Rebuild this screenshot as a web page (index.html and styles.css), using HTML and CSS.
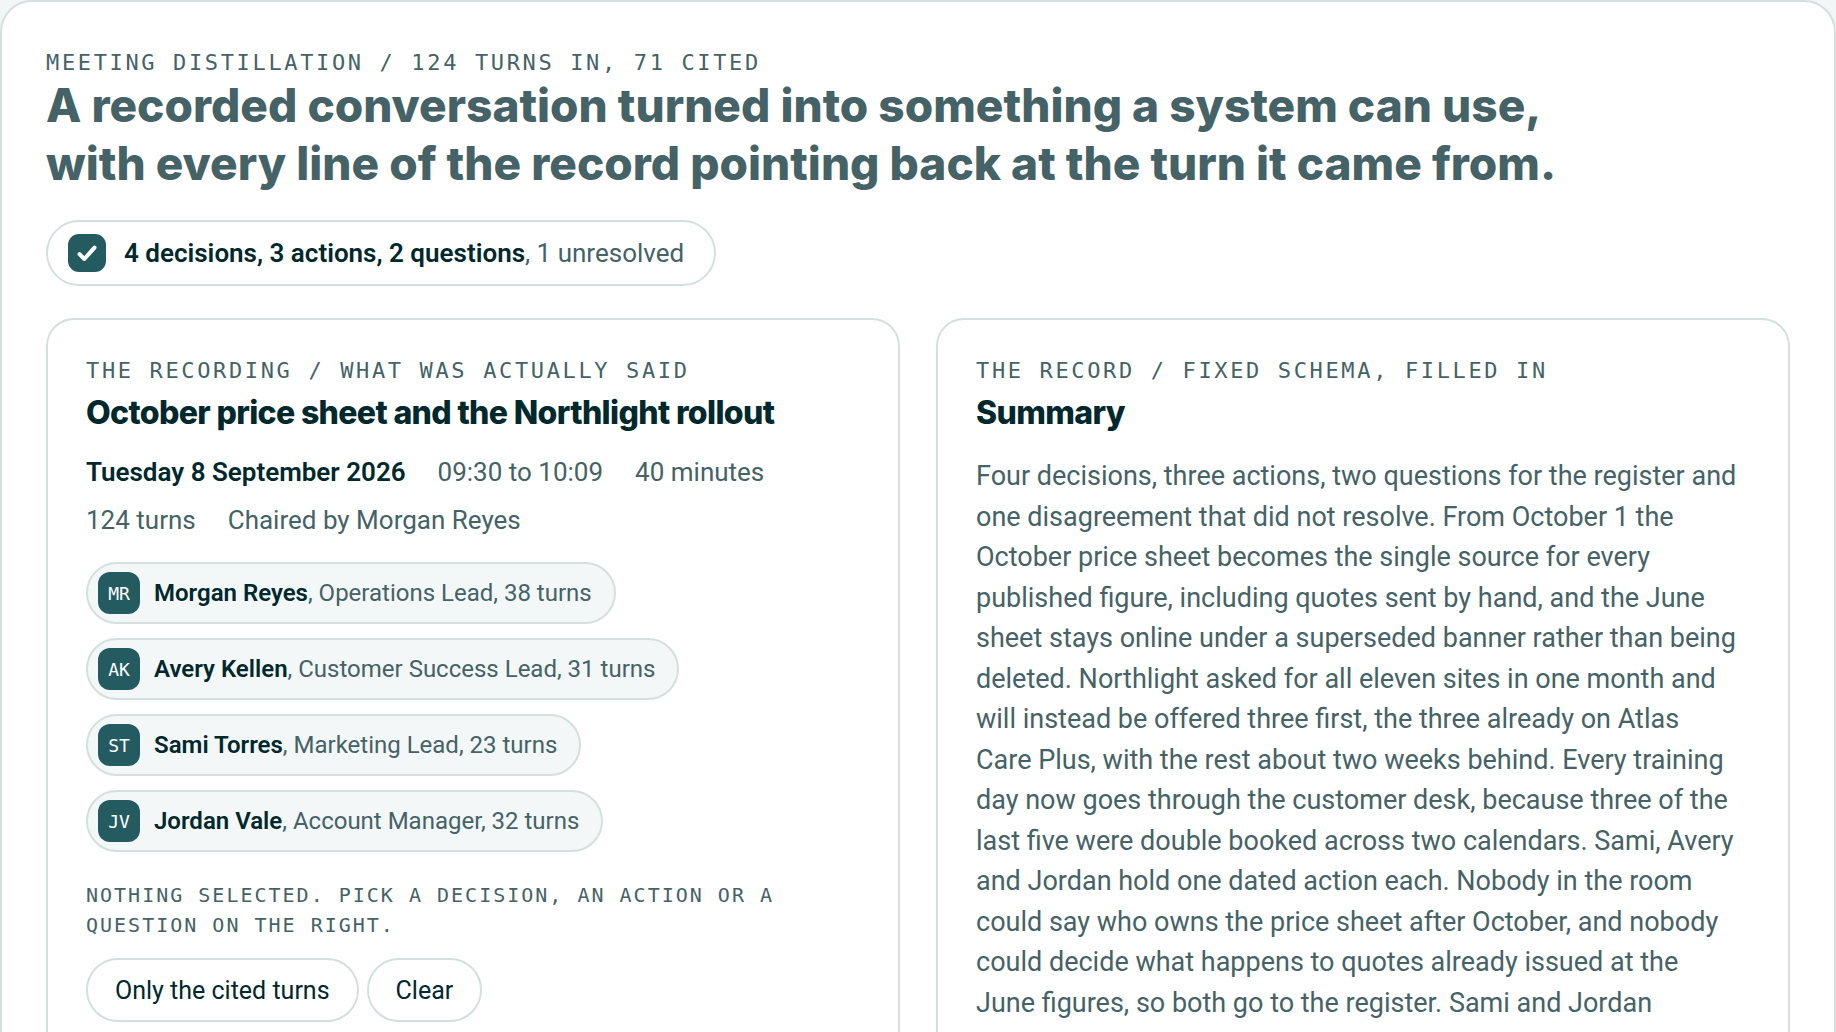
FILE: index.html
```html
<!DOCTYPE html>
<html lang="en">

<head>
  <meta charset="UTF-8" />
  <meta name="viewport" content="width=device-width, initial-scale=1.0" />
  <title>Meeting distillation</title>
  <link rel="stylesheet" href="styles.css">
</head>

<body>
  <main class="sheet">
    <header class="intro">
      <p class="eyebrow">Meeting distillation / 124 turns in, 71 cited</p>
      <h1 class="headline">A recorded conversation turned into something a system can use,<br>
        with every line of the record pointing back at the turn it came from.</h1>
      <p class="tally">
        <svg class="tally-icon" viewBox="0 0 38 38" aria-hidden="true">
          <rect width="38" height="38" rx="11" />
          <path d="M11.5 20.2l4.8 4.8L26.5 13.6" />
        </svg>
        <span><strong>4 decisions, 3 actions, 2 questions</strong>, 1 unresolved</span>
      </p>
    </header>

    <div class="columns">
      <section class="panel">
        <p class="eyebrow">The recording / what was actually said</p>
        <h2>October price sheet and the Northlight rollout</h2>
        <ul class="meta">
          <li><strong>Tuesday 8 September 2026</strong></li>
          <li>09:30 to 10:09</li>
          <li>40 minutes</li>
          <li>124 turns</li>
          <li>Chaired by Morgan Reyes</li>
        </ul>
        <ul class="people">
          <li><span class="initials">MR</span><span><strong>Morgan Reyes</strong>, Operations Lead, 38 turns</span></li>
          <li><span class="initials">AK</span><span><strong>Avery Kellen</strong>, Customer Success Lead, 31 turns</span></li>
          <li><span class="initials">ST</span><span><strong>Sami Torres</strong>, Marketing Lead, 23 turns</span></li>
          <li><span class="initials">JV</span><span><strong>Jordan Vale</strong>, Account Manager, 32 turns</span></li>
        </ul>
        <p class="status">Nothing selected. Pick a decision, an action or a question on the right.</p>
        <div class="actions">
          <button type="button">Only the cited turns</button>
          <button type="button">Clear</button>
        </div>
      </section>

      <section class="panel">
        <p class="eyebrow">The record / fixed schema, filled in</p>
        <h2>Summary</h2>
        <p class="summary">Four decisions, three actions, two questions for the register and<br>
          one disagreement that did not resolve. From October 1 the<br>
          October price sheet becomes the single source for every<br>
          published figure, including quotes sent by hand, and the June<br>
          sheet stays online under a superseded banner rather than being<br>
          deleted. Northlight asked for all eleven sites in one month and<br>
          will instead be offered three first, the three already on Atlas<br>
          Care Plus, with the rest about two weeks behind. Every training<br>
          day now goes through the customer desk, because three of the<br>
          last five were double booked across two calendars. Sami, Avery<br>
          and Jordan hold one dated action each. Nobody in the room<br>
          could say who owns the price sheet after October, and nobody<br>
          could decide what happens to quotes already issued at the<br>
          June figures, so both go to the register. Sami and Jordan</p>
      </section>
    </div>
  </main>
</body>

</html>
```
FILE: styles.css
```css
* {
  box-sizing: border-box;
}

body {
  margin: 0;
  background-color: #f2f6f7;
  color: #456267;
  font-family: Roboto, "Noto Sans", sans-serif;
  font-size: 26px;
}

p,
h1,
h2,
ul {
  margin: 0;
  padding: 0;
}

ul {
  list-style: none;
}

strong {
  color: #00282d;
  font-weight: 600;
}

.sheet {
  min-height: 100vh;
  padding: 44px;
  background-color: #fff;
  border: 2px solid #d5dfe0;
  border-radius: 32px;
}

.eyebrow {
  font-family: "DejaVu Sans Mono", monospace;
  font-size: 22px;
  line-height: 34px;
  letter-spacing: 0.12em;
  text-transform: uppercase;
}

.headline {
  font-family: Inter, "Liberation Sans", sans-serif;
  font-size: 46px;
  font-weight: 800;
  line-height: 58px;
  margin-top: -4px;
}

.tally {
  display: flex;
  align-items: center;
  gap: 18px;
  width: fit-content;
  height: 66px;
  margin-top: 28px;
  padding: 0 30px 0 20px;
  border: 2px solid #d5dfe0;
  border-radius: 33px;
}

.tally-icon {
  width: 38px;
  height: 38px;
}

.tally-icon rect {
  fill: #245b61;
}

.tally-icon path {
  fill: none;
  stroke: #fff;
  stroke-width: 4;
  stroke-linecap: round;
  stroke-linejoin: round;
}

.columns {
  display: grid;
  grid-template-columns: 1fr 1fr;
  gap: 36px;
  margin-top: 32px;
}

.panel {
  padding: 34px 38px;
  border: 2px solid #d5dfe0;
  border-radius: 28px;
}

h2 {
  color: #00282d;
  font-family: Inter, "Liberation Sans", sans-serif;
  font-size: 32px;
  font-weight: 800;
  line-height: 42px;
  letter-spacing: -0.02em;
  margin-top: 4px;
}

.meta {
  display: flex;
  flex-wrap: wrap;
  gap: 8px 32px;
  margin-top: 18px;
  font-size: 26px;
  line-height: 40px;
}

.people {
  display: flex;
  flex-direction: column;
  align-items: flex-start;
  gap: 14px;
  margin-top: 22px;
}

.people li {
  display: flex;
  align-items: center;
  gap: 14px;
  height: 62px;
  padding: 0 22px 0 10px;
  background-color: #f3f7f8;
  border: 2px solid #d5dfe0;
  border-radius: 31px;
  font-size: 24px;
}

.initials {
  display: flex;
  align-items: center;
  justify-content: center;
  width: 42px;
  height: 42px;
  background-color: #245b61;
  border-radius: 12px;
  color: #fff;
  font-family: "DejaVu Sans Mono", monospace;
  font-size: 18px;
}

.status {
  margin-top: 28px;
  font-family: "DejaVu Sans Mono", monospace;
  font-size: 20px;
  line-height: 30px;
  letter-spacing: 0.1em;
  text-transform: uppercase;
}

.actions {
  display: flex;
  gap: 8px;
  margin-top: 18px;
}

button {
  height: 64px;
  padding: 0 27px;
  background-color: #fff;
  border: 2px solid #d5dfe0;
  border-radius: 32px;
  color: #00282d;
  font-family: inherit;
  font-size: 25px;
}

.summary {
  margin-top: 22px;
  font-size: 27px;
  line-height: 1.5;
}
```
